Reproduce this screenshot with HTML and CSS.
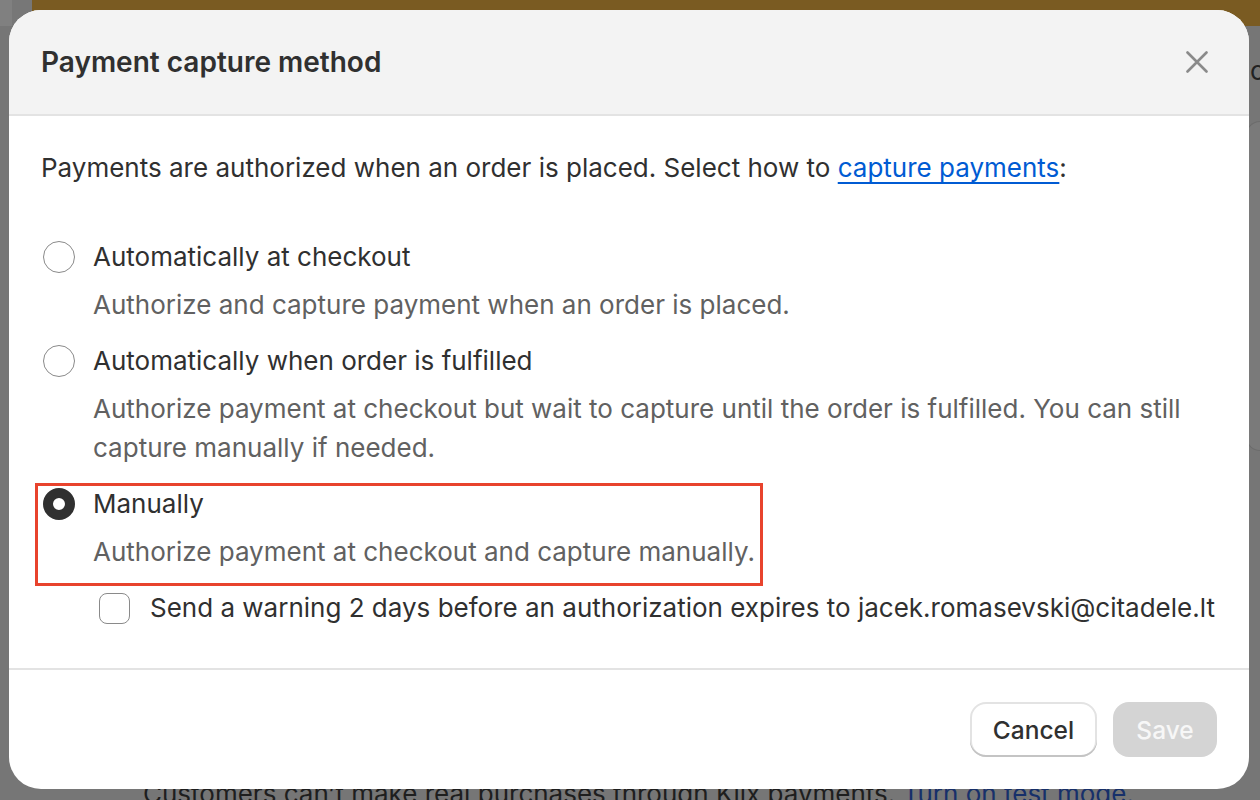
FILE: index.html
```html
<!DOCTYPE html>
<html lang="en">
<head>
<meta charset="utf-8">
<title>Payment capture method</title>
<link rel="stylesheet" href="styles.css">
</head>
<body>
<div class="page">
  <div class="topbar"><div class="topbar-side"></div><div class="topbar-main"></div></div>
  <div class="page-body">
    <div class="side-o">o</div>
    <div class="side-card"></div>
  </div>
  <p class="page-note">Customers can’t make real purchases through Klix payments. <a href="#">Turn on test mode.</a></p>
</div>

<div class="modal" role="dialog" aria-labelledby="modal-title">
  <header class="modal-header">
    <h2 id="modal-title" class="modal-title">Payment capture method</h2>
    <button class="close-btn" aria-label="Close">
      <svg width="22" height="22" viewBox="0 0 22 22"><path d="M1.5 1.5 L20.5 20.5 M20.5 1.5 L1.5 20.5" stroke="#8a8a8a" stroke-width="2.6" stroke-linecap="round" fill="none"/></svg>
    </button>
  </header>
  <section class="modal-body">
    <p class="intro">Payments are authorized when an order is placed. Select how to <a href="#">capture payments</a>:</p>
    <div class="options">
      <div class="option">
        <label class="option-row"><span class="radio"></span><span class="option-label">Automatically at checkout</span></label>
        <p class="option-desc">Authorize and capture payment when an order is placed.</p>
      </div>
      <div class="option">
        <label class="option-row"><span class="radio"></span><span class="option-label">Automatically when order is fulfilled</span></label>
        <p class="option-desc">Authorize payment at checkout but wait to capture until the order is fulfilled. You can still capture manually if needed.</p>
      </div>
      <div class="option highlight">
        <label class="option-row"><span class="radio checked"></span><span class="option-label">Manually</span></label>
        <p class="option-desc">Authorize payment at checkout and capture manually.</p>
      </div>
      <label class="check-row"><span class="checkbox"></span><span class="check-label">Send a warning 2 days before an authorization expires to jacek.romasevski@citadele.lt</span></label>
    </div>
  </section>
  <footer class="modal-footer">
    <button class="btn btn-secondary">Cancel</button>
    <button class="btn btn-primary" disabled>Save</button>
  </footer>
</div>
</body>
</html>
```

FILE: styles.css
```css
* { box-sizing: border-box; }
html, body { margin: 0; padding: 0; }
body {
  width: 1260px;
  height: 800px;
  overflow: hidden;
  background: #767676;
  font-family: Inter, "Noto Sans", sans-serif;
  color: #303030;
  position: relative;
}

/* background page (dimmed by backdrop) */
.page { height: 800px; display: flex; flex-direction: column; }
.topbar { display: flex; height: 26px; }
.topbar-side { width: 32px; background: linear-gradient(to right, #808080 0 12px, #777 12px); }
.topbar-main { flex: 1; background: #7a5b22; }
.page-body { flex: 1; display: flex; flex-direction: column; align-items: flex-end; }
.side-o { font-size: 26px; color: #222; width: 10px; overflow: hidden; margin-top: 30px; line-height: 30px; }
.side-card { width: 14px; height: 330px; margin-top: 35px; border: 1px solid #6c6c6c; border-right: 0; border-radius: 14px 0 0 14px; background: #7a7a7a; }
.page-note {
  margin: 0;
  padding: 0 0 0 143px;
  font-size: 26px;
  line-height: 32px;
  height: 22px;
  color: #1e1e1e;
  white-space: nowrap;
}
.page-note a { color: #17306a; text-decoration: none; }

/* modal */
.modal {
  position: absolute;
  left: 9px;
  top: 10px;
  width: 1240px;
  height: 779px;
  background: #fff;
  border-radius: 32px;
  overflow: hidden;
  display: flex;
  flex-direction: column;
}
.modal-header {
  height: 106px;
  flex: none;
  background: #f3f3f3;
  border-bottom: 2px solid #e3e3e3;
  display: flex;
  align-items: center;
  justify-content: space-between;
  padding: 0 41px 0 32px;
}
.modal-title {
  margin: 0;
  font-size: 28px;
  font-weight: 600;
  line-height: 40px;
  color: #303030;
}
.close-btn {
  border: 0;
  background: none;
  padding: 0;
  width: 22px;
  height: 22px;
  display: flex;
}

.modal-body {
  flex: 1;
  padding: 32px 32px 40px 32px;
  border-bottom: 2px solid #e3e3e3;
  font-size: 26px;
  line-height: 40px;
}
.intro { margin: 0 0 49px; }
.intro a { color: #005bd3; text-decoration: underline; text-underline-offset: 5px; text-decoration-thickness: 2px; }

.options { display: flex; flex-direction: column; gap: 17px; }
.option { position: relative; }
.option-row { display: flex; align-items: center; height: 40px; }
.radio {
  flex: none;
  width: 32px;
  height: 32px;
  margin-left: 2px;
  margin-right: 18px;
  border-radius: 50%;
  border: 1.5px solid #8a8a8a;
  background: #fff;
}
.radio.checked {
  border: 10px solid #303030;
  background: #fff;
}
.option-label { color: #303030; }
.option-desc {
  margin: 8px 0 0 52px;
  line-height: 39px;
  color: #616161;
}
.option.highlight::after {
  content: "";
  box-sizing: border-box;
  position: absolute;
  left: -6px;
  top: -1px;
  width: 728px;
  bottom: -15px;
  border: 3px solid #e8432d;
  pointer-events: none;
}

.check-row { display: flex; align-items: center; height: 40px; margin-left: 58px; }
.checkbox {
  flex: none;
  width: 31px;
  height: 31px;
  border: 1.5px solid #8a8a8a;
  border-radius: 8px;
  margin-right: 20px;
  background: #fff;
}

.modal-footer {
  flex: none;
  display: flex;
  justify-content: flex-end;
  gap: 16px;
  padding: 32px 32px 32px;
}
.btn {
  font-family: inherit;
  font-size: 24.5px;
  font-weight: 500;
  height: 55px;
  border-radius: 16px;
  padding: 0 22px;
}
.btn-secondary {
  width: 127px;
  background: #fff;
  color: #303030;
  border: 0;
  box-shadow: inset 0 -2px 0 #c4c4c4, inset 0 0 0 2px #e3e3e3;
}
.btn-primary {
  width: 104px;
  background: #d4d4d4;
  color: #f7f7f7;
  border: 0;
}
```
